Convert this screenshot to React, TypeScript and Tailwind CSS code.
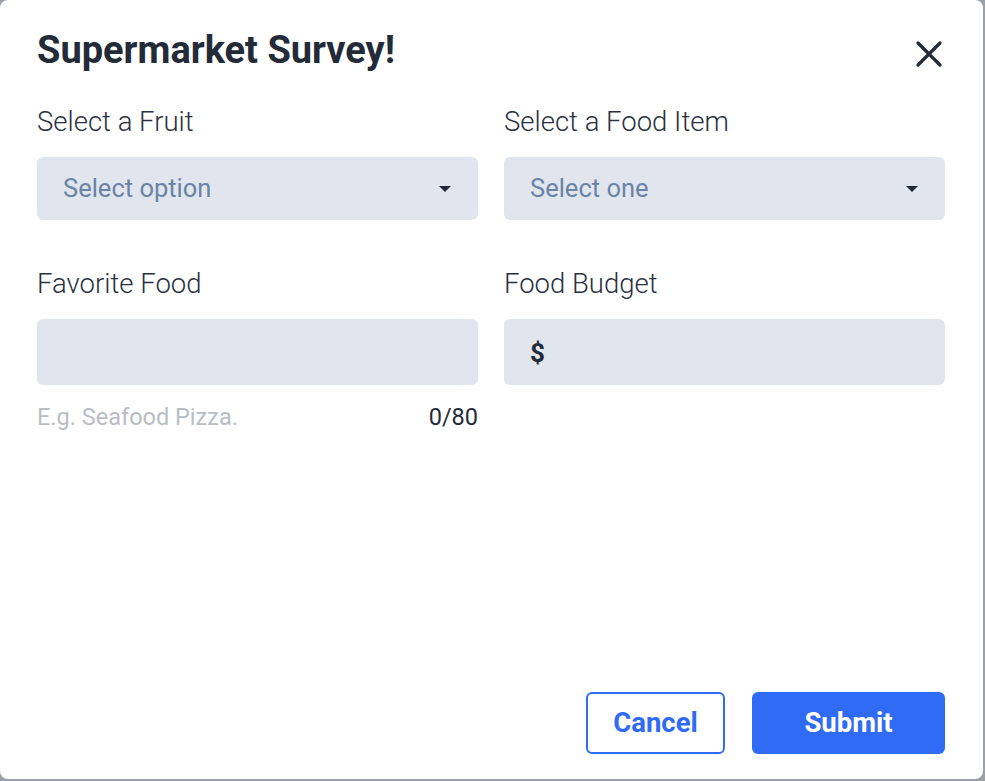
import { useState } from "react";

function Caret() {
  return (
    <svg width="14" height="8" viewBox="0 0 14 8" className="shrink-0">
      <path d="M1 1h12L7 7z" fill="#1f2937" />
    </svg>
  );
}

function SelectBox({ placeholder }: { placeholder: string }) {
  return (
    <button
      type="button"
      className="flex h-[63px] w-full items-center justify-between rounded-md bg-[#e1e6ee] pl-[26px] pr-[26px] text-left text-[25.5px] text-[#6a83a6]"
    >
      <span>{placeholder}</span>
      <Caret />
    </button>
  );
}

function Label({ children }: { children: React.ReactNode }) {
  return (
    <label className="block text-[27.5px] font-light leading-[32px] text-[#2a3140]">
      {children}
    </label>
  );
}

export default function App() {
  const [food, setFood] = useState("");
  const [budget, setBudget] = useState("");

  return (
    <div
      className="min-h-screen bg-[#9aa0a8]"
      style={{ fontFamily: "Roboto, 'Liberation Sans', sans-serif" }}
    >
      <div className="flex h-[779px] w-[983px] flex-col rounded-lg bg-white pl-[37px] pr-[38px]">
        <div className="flex items-center justify-between pt-[28px]">
          <h2 className="text-[38px] font-bold leading-[44px] text-[#242b38]">
            Supermarket Survey!
          </h2>
          <button type="button" aria-label="Close" className="mr-[2px] mt-[8px]">
            <svg width="28" height="28" viewBox="0 0 28 28">
              <path
                d="M3 3L25 25M25 3L3 25"
                stroke="#242b38"
                strokeWidth="3.2"
                strokeLinecap="round"
              />
            </svg>
          </button>
        </div>

        <div className="mt-[34px] grid grid-cols-2 gap-x-[26px]">
          <div>
            <Label>Select a Fruit</Label>
            <div className="mt-[19px]">
              <SelectBox placeholder="Select option" />
            </div>
          </div>
          <div>
            <Label>Select a Food Item</Label>
            <div className="mt-[19px]">
              <SelectBox placeholder="Select one" />
            </div>
          </div>
        </div>

        <div className="mt-[48px] grid grid-cols-2 gap-x-[26px]">
          <div>
            <Label>Favorite Food</Label>
            <input
              value={food}
              onChange={(e) => setFood(e.target.value.slice(0, 80))}
              className="mt-[19px] h-[66px] w-full rounded-md bg-[#e1e6ee] px-[26px] text-[25px] text-[#242b38] outline-none"
            />
            <div className="mt-[18px] flex items-center justify-between text-[23.5px] leading-[28px]">
              <span className="text-[#b9bdc4]">E.g. Seafood Pizza.</span>
              <span className="text-[#242b38]">{food.length}/80</span>
            </div>
          </div>
          <div>
            <Label>Food Budget</Label>
            <div className="mt-[19px] flex h-[66px] w-full items-center rounded-md bg-[#e1e6ee] pl-[26px] pr-[20px]">
              <span className="mt-[2px] text-[26px] font-bold text-[#242b38]">$</span>
              <input
                value={budget}
                onChange={(e) => setBudget(e.target.value)}
                className="ml-2 h-full flex-1 bg-transparent text-[25px] text-[#242b38] outline-none"
              />
            </div>
          </div>
        </div>

        <div className="mt-auto mb-[25px] flex justify-end gap-[27px]">
          <button
            type="button"
            className="h-[62px] w-[139px] rounded-md border-2 border-[#2f6bf5] bg-white text-[27.5px] font-bold text-[#2f6bf5]"
          >
            Cancel
          </button>
          <button
            type="button"
            className="h-[62px] w-[193px] rounded-md bg-[#2f6bf5] text-[27.5px] font-bold text-white"
          >
            Submit
          </button>
        </div>
      </div>
    </div>
  );
}
